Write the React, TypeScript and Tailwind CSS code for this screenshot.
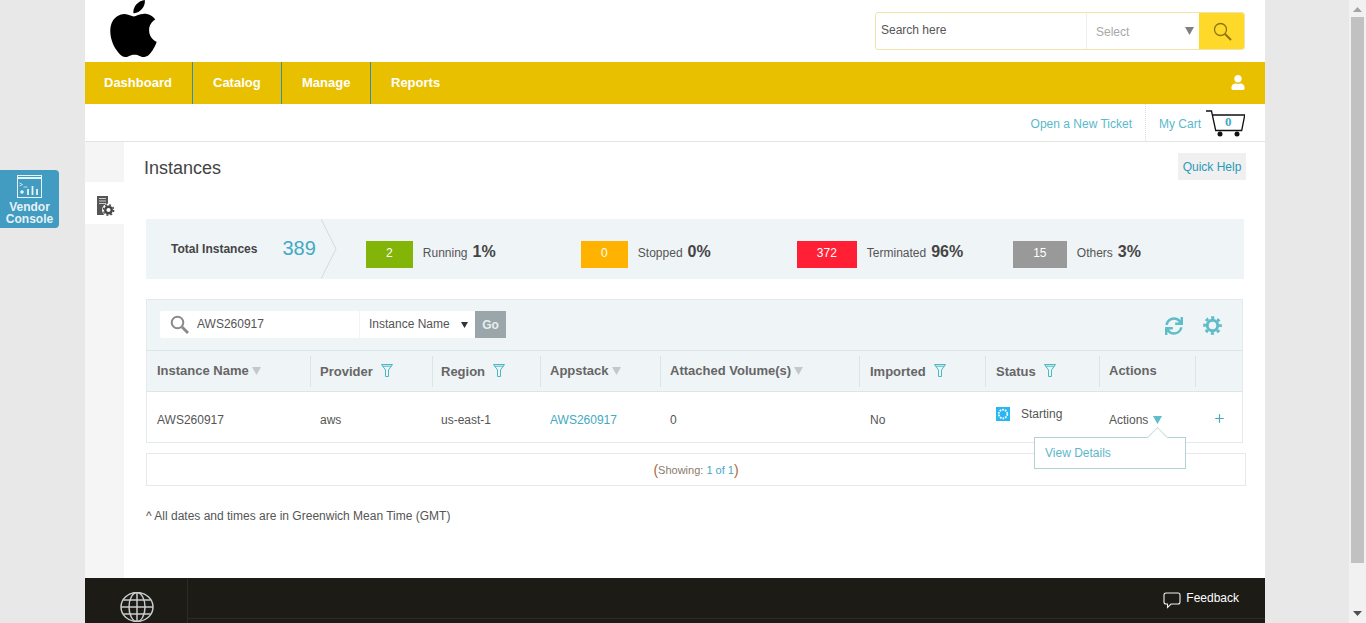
import React from "react";
import { SiApple } from "react-icons/si";
import { FaUser, FaSync } from "react-icons/fa";
import { Plus } from "lucide-react";

const Funnel = () => (
  <svg width="12" height="13" viewBox="0 0 12 13" fill="none" stroke="#4cb8c0" strokeWidth="1" className="shrink-0">
    <path d="M0.500 0.500h11L7.500 6v6.500h-3V6z" />
    <path d="M1.500 2.200h9" />
  </svg>
);

const SortDown = () => (
  <svg width="9" height="8" viewBox="0 0 9 8" className="shrink-0">
    <path d="M0 0h9L4.500 8z" fill="#c4c8ca" />
  </svg>
);

function Head({ label, icon, cls = "" }: { label: string; icon?: "sort" | "filter"; cls?: string }) {
  return (
    <div className={`flex h-[31px] items-center gap-[3px] border-r border-[#d9e6e8] ${cls}`}>
      <span className={`whitespace-nowrap text-[13px] font-bold text-[#666666] ${icon === "filter" ? "mt-[2px]" : ""}`}>{label}</span>
      {icon === "sort" && <SortDown />}
      {icon === "filter" && (
        <span className="mb-[2px] ml-[5px] flex">
          <Funnel />
        </span>
      )}
    </div>
  );
}

function Stat({ value, label, pct, color, w, width }: { value: string; label: string; pct: string; color: string; w: string; width: string }) {
  return (
    <div className={`flex items-center ${width}`}>
      <div className={`mt-[10px] flex h-[27px] items-center justify-center pb-[2px] text-[12px] text-white ${w} ${color}`}>{value}</div>
      <span className="ml-[10px] mt-[7px] text-[12px] text-[#555555]">{label}</span>
      <span className="ml-[5px] mt-[5px] text-[16px] font-bold text-[#444444]">{pct}</span>
    </div>
  );
}

const Cell = ({ children, cls = "" }: { children: React.ReactNode; cls?: string }) => (
  <div className={`whitespace-nowrap text-[12px] ${cls}`}>{children}</div>
);

const COLS = "grid-cols-[164px_122px_108px_120px_199px_126px_114px_96px_46px]";

export default function App() {
  return (
    <div
      className="relative flex h-[623px] w-[1366px] overflow-hidden bg-[#e8e8e8]"
      style={{ fontFamily: '"Liberation Sans", Arial, sans-serif' }}
    >
      <div className="w-[85px] shrink-0" />

      <div className="flex w-[1180px] shrink-0 flex-col bg-white">
        {/* top header */}
        <div className="flex h-[62px] shrink-0 items-start justify-between pr-[20px]">
          <SiApple className="ml-[20px] h-[57px] w-[57px] text-black" />
          <div className="mt-[12px] flex h-[38px] w-[370px] overflow-hidden rounded-[3px] border border-[#efe4ab]">
            <div className="flex w-[211px] items-start border-r border-[#eeeeee] pl-[5px] pt-[8px] text-[12px] text-[#555555]">
              Search here
            </div>
            <div className="relative flex w-[112px] items-center pl-[9px] text-[12px] text-[#a8a8a8]">
              <span className="mt-[2px]">Select</span>
              <svg width="9" height="8" viewBox="0 0 9 8" className="absolute right-[5px] top-[14px]">
                <path d="M0 0h9L4.500 8z" fill="#808080" />
              </svg>
            </div>
            <div className="-my-px -mr-px flex flex-1 items-center justify-center bg-[#ffd92a]">
              <svg width="19" height="19" viewBox="0 0 19 19" fill="none" stroke="#8d7413" strokeWidth="1.300">
                <circle cx="7.500" cy="7.500" r="6" />
                <path d="M12 12l6 6" strokeWidth="2" />
              </svg>
            </div>
          </div>
        </div>

        {/* nav */}
        <div className="flex h-[42px] shrink-0 items-center bg-[#e9c000] text-[13px] font-bold text-white">
          <div className="flex h-full w-[108px] items-center border-r border-[#2f8fb5] pl-[19px]">Dashboard</div>
          <div className="flex h-full w-[89px] items-center border-r border-[#2f8fb5] pl-[20px]">Catalog</div>
          <div className="flex h-full w-[89px] items-center border-r border-[#2f8fb5] pl-[20px]">Manage</div>
          <div className="flex h-full items-center pl-[20px]">Reports</div>
          <FaUser className="ml-auto mr-[20px] -mt-[1px] h-[15px] w-[14px]" />
        </div>

        {/* sub bar */}
        <div className="flex h-[38px] shrink-0 items-center justify-end border-b border-[#e4e4e4] pr-[20px] pt-[2px] text-[12px] text-[#5bb8cc]">
          <span>Open a New Ticket</span>
          <div className="-mt-[2px] ml-[13px] mr-[13px] h-[37px] border-r border-dotted border-[#dddddd]" />
          <span>My Cart</span>
          <div className="relative ml-[5px] mt-[1px] h-[28px] w-[39px]">
            <svg width="39" height="28" viewBox="0 0 39 28" fill="none" stroke="#111111" strokeWidth="1.300">
              <path d="M0 1h5.500l4.200 19.500h26L38.800 5H6.500" />
              <circle cx="14" cy="24" r="2.500" fill="#111111" stroke="none" />
              <circle cx="31" cy="24" r="2.500" fill="#111111" stroke="none" />
            </svg>
            <span
              className="absolute left-[19px] top-[4px] text-[13px] font-bold leading-[15px] text-[#45a9c4]"
              style={{ fontFamily: '"Liberation Serif", serif' }}
            >
              0
            </span>
          </div>
        </div>

        {/* body */}
        <div className="flex min-h-0 flex-1">
          <div className="flex w-[39px] shrink-0 flex-col bg-[#f5f5f5] pt-[40px]">
            <div className="flex h-[42px] items-start justify-center bg-white pl-[4px] pt-[14px]">
              <svg width="19" height="20" viewBox="0 0 19 20">
                <path d="M0 0h11v19H0z" fill="#555555" />
                <path d="M2 2.500h7M2 5h7M2 7.500h7" stroke="#cccccc" strokeWidth="1" />
                <circle cx="11.500" cy="14" r="6.500" fill="#ffffff" />
                <circle cx="11.500" cy="14" r="3.300" fill="none" stroke="#444444" strokeWidth="2.400" />
                <circle cx="11.500" cy="14" r="5.200" fill="none" stroke="#444444" strokeWidth="1.400" strokeDasharray="2 2.080" />
              </svg>
            </div>
          </div>

          <div className="relative min-w-0 flex-1 pl-[22px] pr-[19px]">
            <div className="flex items-start justify-between pt-[11px]">
              <h1 className="-ml-[2px] mt-[3px] text-[18px] leading-[24px] text-[#444444]">Instances</h1>
              <div className="flex h-[27px] w-[68px] items-center justify-center bg-[#f0f0f0] text-[12px] text-[#2a9ab8]">Quick Help</div>
            </div>

            {/* summary */}
            <div className="relative mt-[39px] flex h-[60px] w-[1098px] items-center bg-[#eff4f7]">
              <span className="ml-[25px] text-[12px] font-bold text-[#444444]">Total Instances</span>
              <span className="-mt-[2px] ml-[25px] text-[20px] text-[#45a9c4]">389</span>
              <svg width="16" height="60" viewBox="0 0 16 60" fill="none" stroke="#d4dadd" className="ml-[5px] shrink-0">
                <path d="M0 0l15 30L0 60" />
              </svg>
              <div className="ml-[29px] flex">
                <Stat value="2" label="Running" pct="1%" color="bg-[#82b508]" w="w-[47px]" width="w-[215px]" />
                <Stat value="0" label="Stopped" pct="0%" color="bg-[#ffb300]" w="w-[47px]" width="w-[216px]" />
                <Stat value="372" label="Terminated" pct="96%" color="bg-[#ff2035]" w="w-[60px]" width="w-[216px]" />
                <Stat value="15" label="Others" pct="3%" color="bg-[#999999]" w="w-[54px]" width="w-[180px]" />
              </div>
            </div>

            {/* table */}
            <div className="mt-[20px] w-[1097px] border border-[#e2eaec]">
              <div className="flex h-[51px] items-start border-b border-[#dbe6e9] bg-[#eff4f7] pl-[13px] pr-[20px] pt-[11px]">
                <div className="flex h-[27px] w-[199px] items-center rounded-l-[2px] bg-white pl-[10px]">
                  <svg width="19" height="19" viewBox="0 0 19 19" fill="none" stroke="#8a8a8a" strokeWidth="2">
                    <circle cx="7.500" cy="7.500" r="5.800" />
                    <path d="M12 12l6 6" strokeWidth="2.800" />
                  </svg>
                  <span className="ml-[8px] pb-[1px] text-[12px] text-[#555555]">AWS260917</span>
                </div>
                <div className="ml-px flex h-[27px] w-[115px] items-center justify-between bg-white pl-[9px] pr-[7px] text-[12px] text-[#555555]">
                  <span className="pb-[1px]">Instance Name</span>
                  <svg width="7" height="6" viewBox="0 0 7 6">
                    <path d="M0 0h7L3.500 6z" fill="#333333" />
                  </svg>
                </div>
                <div className="flex h-[27px] w-[31px] items-center justify-center bg-[#9aa6aa] text-[12px] font-bold text-[#e8eeee]">Go</div>
                <FaSync className="ml-auto mt-[6px] h-[18px] w-[18px] text-[#5fbcc9]" />
                <svg width="19" height="19" viewBox="0 0 20 20" fill="none" stroke="#5fbcc9" className="ml-[20px] mt-[5px]">
                  <circle cx="10" cy="10" r="5.500" strokeWidth="3" />
                  <circle cx="10" cy="10" r="8.300" strokeWidth="3" strokeDasharray="3.300 3.220" strokeDashoffset="1.650" />
                </svg>
              </div>

              <div className={`grid h-[41px] items-center border-b border-[#dbe6e9] bg-[#eff4f7] ${COLS}`}>
                <Head label="Instance Name" icon="sort" cls="pl-[10px]" />
                <Head label="Provider" icon="filter" cls="pl-[9px]" />
                <Head label="Region" icon="filter" cls="pl-[8px]" />
                <Head label="Appstack" icon="sort" cls="pl-[9px]" />
                <Head label="Attached Volume(s)" icon="sort" cls="pl-[9px]" />
                <Head label="Imported" icon="filter" cls="pl-[10px]" />
                <Head label="Status" icon="filter" cls="pl-[10px]" />
                <Head label="Actions" cls="pl-[9px]" />
                <div />
              </div>

              <div className={`grid h-[50px] items-center bg-white pt-[5px] text-[#555555] ${COLS}`}>
                <Cell cls="pl-[10px]">AWS260917</Cell>
                <Cell cls="pl-[9px]">aws</Cell>
                <Cell cls="pl-[8px]">us-east-1</Cell>
                <Cell cls="pl-[9px] text-[#45a9c4]">AWS260917</Cell>
                <Cell cls="pl-[9px]">0</Cell>
                <Cell cls="pl-[10px]">No</Cell>
                <Cell cls="-mt-[12px] flex items-center gap-[11px] pl-[10px]">
                  <svg width="14" height="14" viewBox="0 0 14 14">
                    <rect width="14" height="14" fill="#29b6f2" />
                    <circle cx="7" cy="7" r="4.300" fill="none" stroke="#ffffff" strokeWidth="1.800" strokeDasharray="1.700 1" />
                  </svg>
                  <span>Starting</span>
                </Cell>
                <Cell cls="flex items-center gap-[5px] pl-[9px]">
                  <span>Actions</span>
                  <svg width="9" height="8" viewBox="0 0 9 8">
                    <path d="M0 0h9L4.500 8z" fill="#5fbcc9" />
                  </svg>
                </Cell>
                <div className="-mt-[2px] flex justify-center">
                  <Plus className="h-[13px] w-[13px] text-[#45a9c4]" strokeWidth={2.200} />
                </div>
              </div>
            </div>

            {/* pagination */}
            <div className="mt-[10px] flex h-[33px] w-[1100px] items-center justify-center border border-[#e6e9ea] pt-[2px] text-[11px] text-[#8a7a6a]">
              <span className="text-[14px] text-[#a8693a]">(</span>
              <span>Showing:&nbsp;</span>
              <span className="text-[#45a9c4]">1 of 1</span>
              <span className="text-[14px] text-[#a8693a]">)</span>
            </div>

            <p className="mt-[21px] text-[12px] text-[#555555]">^ All dates and times are in Greenwich Mean Time (GMT)</p>

            {/* popover */}
            <div className="absolute left-[910px] top-[295px] flex h-[32px] w-[152px] items-center border border-[#b3d0d2] bg-white pl-[10px] text-[12px] text-[#5bb8cc]">
              <span className="absolute -top-[8px] left-[115px] h-[15px] w-[15px] rotate-45 border-l border-t border-[#c8dcdd] bg-white" />
              <span className="relative">View Details</span>
            </div>
          </div>
        </div>

        {/* footer */}
        <div className="flex h-[45px] shrink-0 bg-[#1c1b16]">
          <div className="flex w-[103px] justify-center border-r border-[#2c2b26] pl-[1px] pt-[14px]">
            <svg width="34" height="30" viewBox="0 0 34 30" fill="none" stroke="#c8cccc" strokeWidth="1.500" className="shrink-0">
              <ellipse cx="17" cy="15" rx="16" ry="14.500" />
              <ellipse cx="17" cy="15" rx="8" ry="14.500" />
              <path d="M17 0.500v29M1 15h32M3.500 8h27M3.500 22h27" />
            </svg>
          </div>
          <div className="flex flex-1 flex-col">
            <div className="flex h-[41px] items-start justify-end border-b border-[#2c2b26] pr-[26px] pt-[11px] text-[12px] text-white">
              <svg width="18" height="17" viewBox="0 0 18 17" fill="none" stroke="#f0f0f0" strokeWidth="1.100" className="mr-[5px] mt-[3px]">
                <path d="M3 1h12a2 2 0 0 1 2 2v7a2 2 0 0 1-2 2H8l-3.500 3.500V12H3a2 2 0 0 1-2-2V3a2 2 0 0 1 2-2z" />
              </svg>
              <span>Feedback</span>
            </div>
          </div>
        </div>
      </div>

      <div className="w-[84px] shrink-0" />

      {/* scrollbar */}
      <div className="flex w-[17px] shrink-0 flex-col items-center bg-[#f1f1f1]">
        <svg width="9" height="5" viewBox="0 0 9 5" className="mb-[5px] mt-[7px]">
          <path d="M0 5h9L4.500 0z" fill="#a3a3a3" />
        </svg>
        <div className="h-[546px] w-[13px] bg-[#c1c1c1]" />
        <svg width="9" height="5" viewBox="0 0 9 5" className="mb-[7px] mt-auto">
          <path d="M0 0h9L4.500 5z" fill="#505050" />
        </svg>
      </div>

      {/* vendor console */}
      <div className="absolute left-0 top-[170px] flex h-[58px] w-[59px] flex-col items-center rounded-r-[4px] bg-[#429bc0] pt-[5px] text-white">
        <svg width="25" height="23" viewBox="0 0 25 23" fill="none" stroke="#e6f2f6" strokeWidth="1">
          <rect x="0.500" y="0.500" width="24" height="22" />
          <path d="M1 3h23" strokeWidth="2" />
          <path d="M2.500 8l3 1.500-3 1.500M6.500 12h4" strokeWidth="0.800" />
          <circle cx="5" cy="17" r="1.800" fill="#e6f2f6" stroke="none" />
          <path d="M11 20v-6M15.500 20v-9M20 20v-6" strokeWidth="1.800" />
        </svg>
        <span className="mt-[3px] text-[12px] font-bold leading-[12px] text-[#e6f2f6]">Vendor</span>
        <span className="text-[12px] font-bold leading-[12px] text-[#e6f2f6]">Console</span>
      </div>
    </div>
  );
}
